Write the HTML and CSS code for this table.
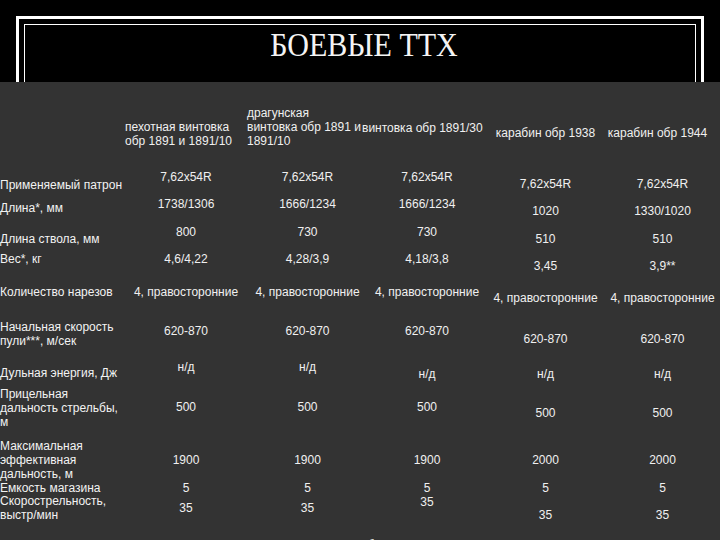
FILE: index.html
```html
<!DOCTYPE html>
<html lang="ru">
<head>
<meta charset="utf-8">
<title>Боевые ТТХ</title>
<link rel="stylesheet" href="styles.css">
</head>
<body>
<header class="top">
  <div class="frame">
    <div class="inner">
      <h1 class="title">БОЕВЫЕ ТТХ</h1>
    </div>
  </div>
</header>
<main class="sheet">
  <div class="grid">
    <div class="lbl"></div>
    <div class="hd h1">пехотная винтовка обр 1891 и 1891/10</div>
    <div class="hd h2">драгунская винтовка обр 1891 и 1891/10</div>
    <div class="hd h3">винтовка обр 1891/30</div>
    <div class="hd h4">карабин обр 1938</div>
    <div class="hd h4 h5">карабин обр 1944</div>

    <div class="lbl o8">Применяемый патрон</div>
    <div class="c">7,62x54R</div>
    <div class="c">7,62x54R</div>
    <div class="c">7,62x54R</div>
    <div class="c o7">7,62x54R</div>
    <div class="c o7">7,62x54R</div>

    <div class="lbl o4">Длина*, мм</div>
    <div class="c">1738/1306</div>
    <div class="c">1666/1234</div>
    <div class="c">1666/1234</div>
    <div class="c o7">1020</div>
    <div class="c o7">1330/1020</div>

    <div class="lbl o7">Длина ствола, мм</div>
    <div class="c">800</div>
    <div class="c">730</div>
    <div class="c">730</div>
    <div class="c o7">510</div>
    <div class="c o7">510</div>

    <div class="lbl">Вес*, кг</div>
    <div class="c">4,6/4,22</div>
    <div class="c">4,28/3,9</div>
    <div class="c">4,18/3,8</div>
    <div class="c o7">3,45</div>
    <div class="c o7">3,9**</div>

    <div class="lbl">Количество нарезов</div>
    <div class="c">4, правосторонние</div>
    <div class="c">4, правосторонние</div>
    <div class="c">4, правосторонние</div>
    <div class="c o6">4, правосторонние</div>
    <div class="c o6">4, правосторонние</div>

    <div class="lbl u4">Начальная скорость пули***, м/сек</div>
    <div class="c">620-870</div>
    <div class="c">620-870</div>
    <div class="c">620-870</div>
    <div class="c o8">620-870</div>
    <div class="c o8">620-870</div>

    <div class="lbl o6">Дульная энергия, Дж</div>
    <div class="c">н/д</div>
    <div class="c">н/д</div>
    <div class="c o7">н/д</div>
    <div class="c o7">н/д</div>
    <div class="c o7">н/д</div>

    <div class="lbl u13">Прицельная дальность стрельбы, м</div>
    <div class="c">500</div>
    <div class="c">500</div>
    <div class="c">500</div>
    <div class="c o6">500</div>
    <div class="c o6">500</div>

    <div class="lbl u14">Максимальная эффективная дальность, м</div>
    <div class="c">1900</div>
    <div class="c">1900</div>
    <div class="c">1900</div>
    <div class="c">2000</div>
    <div class="c">2000</div>

    <div class="lbl">Емкость магазина</div>
    <div class="c">5</div>
    <div class="c">5</div>
    <div class="c">5</div>
    <div class="c">5</div>
    <div class="c">5</div>

    <div class="lbl u7">Скорострельность, выстр/мин</div>
    <div class="c">35</div>
    <div class="c">35</div>
    <div class="c u6">35</div>
    <div class="c o7">35</div>
    <div class="c o7">35</div>
  </div>
  <p class="note">* со штыком/без штыка</p>
</main>
</body>
</html>
```

FILE: styles.css
```css
* {
  box-sizing: border-box;
}

html,
body {
  margin: 0;
  padding: 0;
  background: #333333;
  overflow: hidden;
}

body {
  width: 720px;
  height: 540px;
  font-family: "Liberation Sans", Arial, sans-serif;
  color: #f0f0f0;
}

.top {
  height: 82px;
  background: #000000;
  padding: 16px 16px 0 16px;
}

.frame {
  height: 66px;
  border: 3px solid #ffffff;
  border-bottom: none;
  padding: 5px 5px 0 5px;
}

.inner {
  height: 58px;
  border: 1px solid #ffffff;
  border-bottom: none;
  padding: 4px 0 0 8px;
  text-align: center;
}

.title {
  display: inline-block;
  margin: 0;
  font-family: "Liberation Serif", "Times New Roman", serif;
  font-weight: normal;
  font-size: 33px;
  line-height: 33px;
  color: #f4f4f4;
  transform: scaleX(0.91);
}

.sheet {
  background: #333333;
}

.grid {
  display: grid;
  grid-template-columns: 125px 122px 121px 118px 119px 115px;
  grid-template-rows: 88px 27px 28px 27px 33px 39px 36px 40px 53px 28px 20px 33px;
  align-items: start;
  font-size: 12px;
  line-height: 14px;
}

.lbl {
  text-align: left;
  color: #f2f2f2;
}

.c {
  text-align: center;
  white-space: nowrap;
}

.hd {
  text-align: left;
}

.h1 {
  margin-top: 38px;
}

.h2 {
  margin-top: 24px;
  max-width: 114.5px;
}

.h3 {
  margin-top: 39px;
  margin-left: -6px;
  white-space: nowrap;
}

.h4 {
  margin-top: 44px;
  text-align: center;
  white-space: nowrap;
}

.h5 {
  padding-right: 10px;
}

.o4 { margin-top: 4px; }
.o6 { margin-top: 6px; }
.o7 { margin-top: 7px; }
.o8 { margin-top: 8px; }
.u4 { margin-top: -4px; }
.u6 { margin-top: -6px; }
.u7 { margin-top: -7px; }
.u13 { margin-top: -13px; }
.u14 { margin-top: -14px; }

.note {
  margin: 0;
  padding: 4px 0 0 296px;
  font-size: 12px;
  line-height: 14px;
  white-space: nowrap;
}
```
